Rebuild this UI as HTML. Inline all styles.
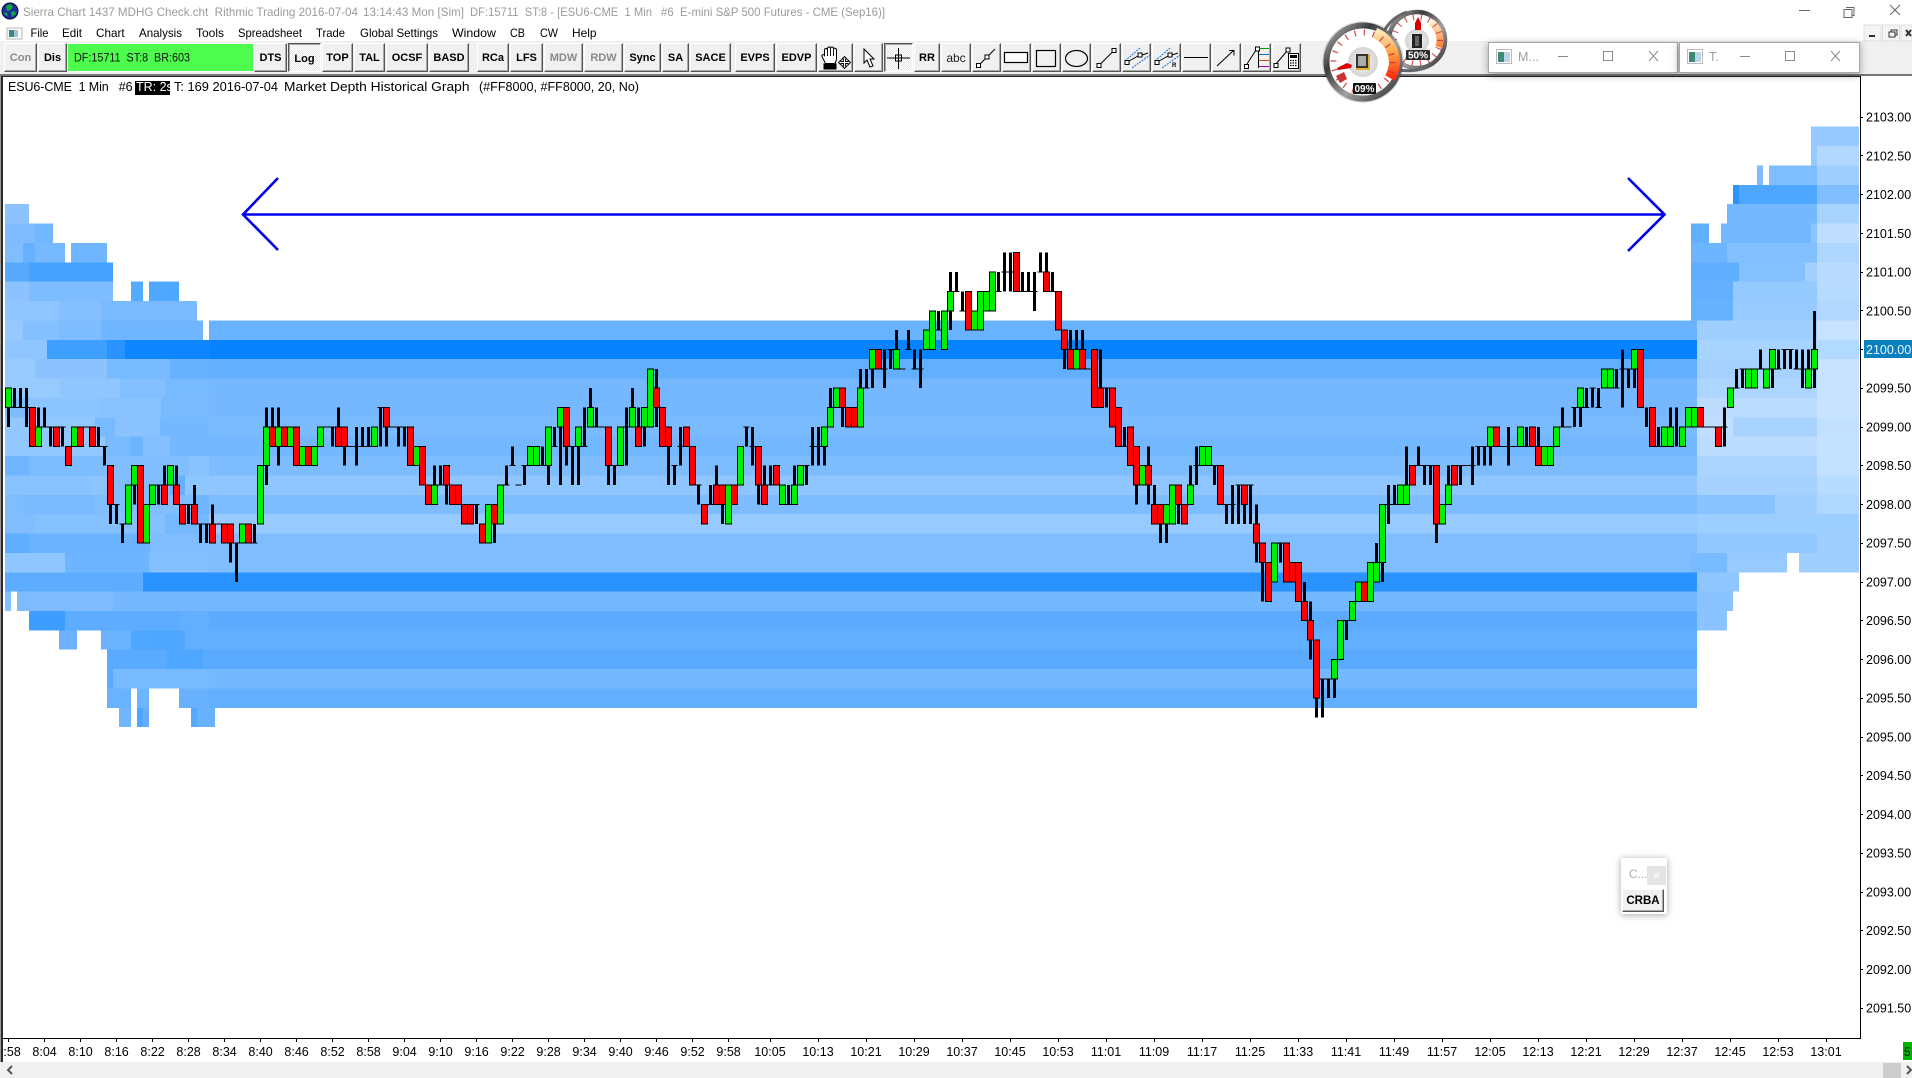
<!DOCTYPE html>
<html><head><meta charset="utf-8"><title>Sierra Chart</title>
<style>
html,body{margin:0;padding:0;background:#fff;width:1912px;height:1078px;overflow:hidden}
body{position:relative;font-family:"Liberation Sans",sans-serif}
#tb{position:absolute;left:0;top:41px;width:1912px;height:33px;background:#f0f0f0}
#tl{position:absolute;left:0;top:74px;width:1912px;height:2px;background:#777}
#sb{position:absolute;left:0;top:1062px;width:1912px;height:16px;background:#f0f0f0}
.b{position:absolute;top:43px;height:29px;box-sizing:border-box;background:#f0f0f0;border:1px solid;border-color:#fff #555 #555 #fff;box-shadow:inset -1px -1px #a8a8a8;font:bold 11px/29px "Liberation Sans",sans-serif;color:#000;text-align:center;white-space:pre}
.g{color:#8a8a8a}
.p{border-color:#555 #fff #fff #555;box-shadow:inset 1px 1px #a8a8a8;background:repeating-conic-gradient(#fff 0 25%,#e6e6e6 0 50%) 0 0/2px 2px}
.w{position:absolute;top:42px;height:31px;box-sizing:border-box;background:#fff;border:1px solid #a8a8a8;box-shadow:0 2px 8px rgba(0,0,0,.35)}
#pop{position:absolute;left:1621px;top:858px;width:46px;height:56px;background:#fff;box-shadow:0 1px 7px rgba(0,0,0,.35)}
svg{position:absolute;left:0;top:0}
text{white-space:pre;font-family:"Liberation Sans",sans-serif}
.bd rect{height:1px}
.p1{font-size:12.5px;fill:#000}
.t1{font-size:12.5px;fill:#000;text-anchor:middle}
.m{font-size:12px;fill:#000}
</style></head><body>
<div id="tb"></div><div id="tl"></div><div id="sb"></div>

<div class="b g" style="left:4px;width:33px">Con</div>
<div class="b" style="left:38px;width:29px">Dis</div>
<div class="b" style="left:67px;width:187px;background:#4dfc4d;box-shadow:none;border-color:#f8f8f8"></div>
<div class="b" style="left:254px;width:33px">DTS</div>
<div class="b p" style="left:288px;width:33px;line-height:31px">Log</div>
<div class="b" style="left:322px;width:31px">TOP</div>
<div class="b" style="left:354px;width:31px">TAL</div>
<div class="b" style="left:386px;width:42px">OCSF</div>
<div class="b" style="left:429px;width:40px">BASD</div>
<div class="b" style="left:477px;width:32px">RCa</div>
<div class="b" style="left:510px;width:33px">LFS</div>
<div class="b g" style="left:544px;width:39px">MDW</div>
<div class="b g" style="left:584px;width:39px">RDW</div>
<div class="b" style="left:624px;width:37px">Sync</div>
<div class="b" style="left:662px;width:27px">SA</div>
<div class="b" style="left:690px;width:41px">SACE</div>
<div class="b" style="left:735px;width:40px">EVPS</div>
<div class="b" style="left:776px;width:41px">EDVP</div>
<div class="b" style="left:818px;width:35px"></div>
<div class="b" style="left:854px;width:29px"></div>
<div class="b p" style="left:884px;width:29px"></div>
<div class="b" style="left:914px;width:26px">RR</div>
<div class="b" style="left:941px;width:30px;font-weight:normal;font-size:12px;color:#222">abc</div>
<div class="b" style="left:972px;width:29px"></div>
<div class="b" style="left:1002px;width:29px"></div>
<div class="b" style="left:1032px;width:29px"></div>
<div class="b" style="left:1062px;width:29px"></div>
<div class="b" style="left:1092px;width:29px"></div>
<div class="b" style="left:1122px;width:29px"></div>
<div class="b" style="left:1152px;width:29px"></div>
<div class="b" style="left:1182px;width:29px"></div>
<div class="b" style="left:1212px;width:29px"></div>
<div class="b" style="left:1242px;width:29px"></div>
<div class="b" style="left:1272px;width:29px"></div>

<svg width="1912" height="1078" viewBox="0 0 1912 1078">
<defs>
<linearGradient id="ring" x1="0" y1="0" x2="1" y2="1"><stop offset="0" stop-color="#bdbdbd"/><stop offset=".3" stop-color="#3c3c3c"/><stop offset=".6" stop-color="#a0a0a0"/><stop offset="1" stop-color="#2a2a2a"/></linearGradient>
<linearGradient id="arc1" x1="0" y1="0" x2="0" y2="1"><stop offset="0" stop-color="#ffe3b0"/><stop offset=".45" stop-color="#ffa040"/><stop offset="1" stop-color="#ff2a10"/></linearGradient>
<linearGradient id="arc2" x1="0" y1="0" x2="0" y2="1"><stop offset="0" stop-color="#ffeec8"/><stop offset="1" stop-color="#ff7a30"/></linearGradient>
<radialGradient id="disc"><stop offset="0" stop-color="#f6f6f6"/><stop offset="1" stop-color="#d4d4d4"/></radialGradient>
<clipPath id="tr"><rect x="135" y="81" width="35" height="14"/></clipPath>
<clipPath id="lft"><rect x="3" y="1040" width="40" height="20"/></clipPath>
</defs>

<!-- depth bands -->
<g class="bd" transform="translate(0 349.5) scale(1 19.37)" shape-rendering="crispEdges">
<!-- main -->
<rect x="209" y="-1.5" width="1488" fill="#68b2ff"/><rect x="209" y="-.5" width="1488" fill="#0783ff"/><rect x="209" y=".5" width="1488" fill="#62aeff"/><rect x="209" y="1.5" width="1488" fill="#75b8ff"/><rect x="209" y="2.5" width="1488" fill="#75b8ff"/><rect x="209" y="3.5" width="1488" fill="#7abbff"/><rect x="209" y="4.5" width="1488" fill="#72b7ff"/><rect x="209" y="5.5" width="1488" fill="#7cbcff"/><rect x="209" y="6.5" width="1488" fill="#8fc6ff"/><rect x="209" y="7.5" width="1488" fill="#7dbcff"/><rect x="209" y="8.5" width="1488" fill="#98caff"/><rect x="209" y="9.5" width="1488" fill="#7fbdff"/><rect x="209" y="10.5" width="1488" fill="#7fbdff"/><rect x="209" y="11.5" width="1488" fill="#2a93ff"/><rect x="209" y="12.5" width="1488" fill="#72b7ff"/><rect x="209" y="13.5" width="1488" fill="#5dabff"/><rect x="209" y="14.5" width="1488" fill="#62aeff"/><rect x="209" y="15.5" width="1488" fill="#5aaaff"/><rect x="209" y="16.5" width="1488" fill="#74b8ff"/><rect x="209" y="17.5" width="1488" fill="#62aeff"/>
<!-- left -->
<rect x="5" y="-7.5" width="24" fill="#8cc3ff"/>
<rect x="5" y="-6.5" width="30" fill="#7fbcff"/><rect x="35" y="-6.5" width="18" fill="#72b7ff"/>
<rect x="5" y="-5.5" width="18" fill="#80bdff"/><rect x="23" y="-5.5" width="12" fill="#66b1ff"/><rect x="35" y="-5.5" width="30" fill="#76b9ff"/><rect x="71" y="-5.5" width="36" fill="#6fb5ff"/>
<rect x="5" y="-4.5" width="24" fill="#58aaff"/><rect x="29" y="-4.5" width="84" fill="#45a2ff"/>
<rect x="5" y="-3.5" width="24" fill="#8cc3ff"/><rect x="29" y="-3.5" width="84" fill="#7dbcff"/><rect x="131" y="-3.5" width="12" fill="#55abff"/><rect x="149" y="-3.5" width="30" fill="#4fa8ff"/>
<rect x="5" y="-2.5" width="54" fill="#8fc6ff"/><rect x="59" y="-2.5" width="42" fill="#84c0ff"/><rect x="101" y="-2.5" width="96" fill="#79baff"/>
<rect x="5" y="-1.5" width="18" fill="#96caff"/><rect x="23" y="-1.5" width="36" fill="#84c0ff"/><rect x="59" y="-1.5" width="42" fill="#7cbcff"/><rect x="101" y="-1.5" width="102" fill="#6fb5ff"/>
<rect x="5" y="-.5" width="42" fill="#90c6ff"/><rect x="47" y="-.5" width="60" fill="#3f9fff"/><rect x="107" y="-.5" width="18" fill="#2a93ff"/><rect x="125" y="-.5" width="84" fill="#0d86ff"/>
<rect x="5" y=".5" width="30" fill="#97cbff"/><rect x="35" y=".5" width="72" fill="#8cc3ff"/><rect x="107" y=".5" width="63" fill="#78baff"/><rect x="170" y=".5" width="39" fill="#67b1ff"/>
<rect x="5" y="1.5" width="55" fill="#97cbff"/><rect x="60" y="1.5" width="60" fill="#90c6ff"/><rect x="120" y="1.5" width="45" fill="#82bfff"/><rect x="165" y="1.5" width="44" fill="#78baff"/>
<rect x="5" y="2.5" width="24" fill="#7dbcff"/><rect x="29" y="2.5" width="71" fill="#8cc4ff"/><rect x="100" y="2.5" width="61" fill="#88c2ff"/><rect x="161" y="2.5" width="48" fill="#79baff"/>
<rect x="5" y="3.5" width="90" fill="#92c8ff"/><rect x="95" y="3.5" width="20" fill="#78baff"/><rect x="115" y="3.5" width="45" fill="#8ac3ff"/><rect x="160" y="3.5" width="49" fill="#74b8ff"/>
<rect x="5" y="4.5" width="100" fill="#92c8ff"/><rect x="105" y="4.5" width="25" fill="#7abbff"/><rect x="130" y="4.5" width="13" fill="#6db5ff"/><rect x="143" y="4.5" width="27" fill="#84c0ff"/><rect x="170" y="4.5" width="39" fill="#74b8ff"/>
<rect x="5" y="5.5" width="24" fill="#6fb5ff"/><rect x="29" y="5.5" width="76" fill="#7dbcff"/><rect x="105" y="5.5" width="85" fill="#80beff"/><rect x="190" y="5.5" width="19" fill="#8ac3ff"/>
<rect x="5" y="6.5" width="85" fill="#88c2ff"/><rect x="90" y="6.5" width="17" fill="#8cc4ff"/><rect x="107" y="6.5" width="63" fill="#80bdff"/><rect x="170" y="6.5" width="15" fill="#66b1ff"/><rect x="185" y="6.5" width="24" fill="#8ec6ff"/>
<rect x="5" y="7.5" width="18" fill="#80bdff"/><rect x="23" y="7.5" width="72" fill="#7abbff"/><rect x="95" y="7.5" width="100" fill="#80beff"/><rect x="195" y="7.5" width="14" fill="#70b5ff"/>
<rect x="5" y="8.5" width="30" fill="#80bdff"/><rect x="35" y="8.5" width="130" fill="#86c1ff"/><rect x="165" y="8.5" width="44" fill="#76b9ff"/>
<rect x="5" y="9.5" width="24" fill="#5eadff"/><rect x="29" y="9.5" width="121" fill="#6bb3ff"/><rect x="150" y="9.5" width="59" fill="#7fbdff"/>
<rect x="5" y="10.5" width="60" fill="#8fc6ff"/><rect x="65" y="10.5" width="84" fill="#6db5ff"/><rect x="149" y="10.5" width="60" fill="#84c0ff"/>
<rect x="5" y="11.5" width="138" fill="#5dacff"/><rect x="143" y="11.5" width="66" fill="#2a93ff"/>
<rect x="5" y="12.5" width="6" fill="#84c0ff"/><rect x="17" y="12.5" width="96" fill="#7fbcff"/><rect x="113" y="12.5" width="96" fill="#75b8ff"/>
<rect x="29" y="13.5" width="36" fill="#3e9eff"/><rect x="65" y="13.5" width="114" fill="#5dacff"/><rect x="179" y="13.5" width="30" fill="#62aeff"/>
<rect x="59" y="14.5" width="18" fill="#6cb3ff"/><rect x="101" y="14.5" width="30" fill="#69b2ff"/><rect x="131" y="14.5" width="54" fill="#50a7ff"/><rect x="185" y="14.5" width="24" fill="#62aeff"/>
<rect x="107" y="15.5" width="60" fill="#5aabff"/><rect x="167" y="15.5" width="36" fill="#4fa6ff"/><rect x="203" y="15.5" width="6" fill="#5aaaff"/>
<rect x="107" y="16.5" width="6" fill="#5aaaff"/><rect x="113" y="16.5" width="96" fill="#78baff"/>
<rect x="107" y="17.5" width="24" fill="#69b2ff"/><rect x="137" y="17.5" width="12" fill="#6cb5ff"/><rect x="179" y="17.5" width="30" fill="#68b1ff"/>
<rect x="119" y="18.5" width="12" fill="#6fb5ff"/><rect x="137" y="18.5" width="6" fill="#4fa6ff"/><rect x="143" y="18.5" width="6" fill="#65aeff"/><rect x="191" y="18.5" width="6" fill="#52a9ff"/><rect x="197" y="18.5" width="18" fill="#67b1ff"/>
<!-- right -->
<rect x="1811" y="-11.5" width="48" fill="#95c9ff"/>
<rect x="1811" y="-10.5" width="6" fill="#95c9ff"/><rect x="1817" y="-10.5" width="42" fill="#b2d8ff"/>
<rect x="1757" y="-9.5" width="6" fill="#7fbdff"/><rect x="1769" y="-9.5" width="48" fill="#7ebdff"/><rect x="1817" y="-9.5" width="42" fill="#9fcfff"/>
<rect x="1733" y="-8.5" width="6" fill="#2a93ff"/><rect x="1739" y="-8.5" width="78" fill="#4ea7ff"/><rect x="1817" y="-8.5" width="42" fill="#80beff"/>
<rect x="1727" y="-7.5" width="90" fill="#74b8ff"/><rect x="1817" y="-7.5" width="42" fill="#a9d3ff"/>
<rect x="1691" y="-6.5" width="18" fill="#63afff"/><rect x="1721" y="-6.5" width="90" fill="#72b7ff"/><rect x="1811" y="-6.5" width="6" fill="#8ac3ff"/><rect x="1817" y="-6.5" width="42" fill="#c0deff"/>
<rect x="1691" y="-5.5" width="36" fill="#6db5ff"/><rect x="1727" y="-5.5" width="90" fill="#82bfff"/><rect x="1817" y="-5.5" width="42" fill="#aed6ff"/>
<rect x="1691" y="-4.5" width="48" fill="#5faeff"/><rect x="1739" y="-4.5" width="66" fill="#85c1ff"/><rect x="1805" y="-4.5" width="12" fill="#a4d0ff"/><rect x="1817" y="-4.5" width="42" fill="#b8dbff"/>
<rect x="1691" y="-3.5" width="42" fill="#64b0ff"/><rect x="1733" y="-3.5" width="84" fill="#95caff"/><rect x="1817" y="-3.5" width="42" fill="#b6dbff"/>
<rect x="1691" y="-2.5" width="42" fill="#67b2ff"/><rect x="1733" y="-2.5" width="84" fill="#97cbff"/><rect x="1817" y="-2.5" width="42" fill="#b2d8ff"/>
<rect x="1697" y="-1.5" width="120" fill="#9fcfff"/><rect x="1817" y="-1.5" width="42" fill="#c6e2ff"/>
<rect x="1697" y="-.5" width="120" fill="#a6d3ff"/><rect x="1817" y="-.5" width="42" fill="#b2d9ff"/>
<rect x="1697" y=".5" width="120" fill="#a4d1ff"/><rect x="1817" y=".5" width="42" fill="#c6e2ff"/>
<rect x="1697" y="1.5" width="120" fill="#acd5ff"/><rect x="1817" y="1.5" width="42" fill="#c6e2ff"/>
<rect x="1697" y="2.5" width="120" fill="#bcdcff"/><rect x="1817" y="2.5" width="42" fill="#c8e3ff"/>
<rect x="1697" y="3.5" width="36" fill="#c0deff"/><rect x="1733" y="3.5" width="84" fill="#a9d3ff"/><rect x="1817" y="3.5" width="42" fill="#c2e0ff"/>
<rect x="1697" y="4.5" width="120" fill="#bcdcff"/><rect x="1817" y="4.5" width="42" fill="#c4e1ff"/>
<rect x="1697" y="5.5" width="120" fill="#aad4ff"/><rect x="1817" y="5.5" width="42" fill="#c4e1ff"/>
<rect x="1697" y="6.5" width="120" fill="#a6d2ff"/><rect x="1817" y="6.5" width="42" fill="#b8dcff"/>
<rect x="1697" y="7.5" width="78" fill="#8ac3ff"/><rect x="1775" y="7.5" width="42" fill="#9fceff"/><rect x="1817" y="7.5" width="42" fill="#b0d7ff"/>
<rect x="1697" y="8.5" width="162" fill="#9cceff"/>
<rect x="1697" y="9.5" width="120" fill="#92c8ff"/><rect x="1817" y="9.5" width="42" fill="#9fcfff"/>
<rect x="1691" y="10.5" width="36" fill="#78baff"/><rect x="1727" y="10.5" width="60" fill="#97cbff"/><rect x="1799" y="10.5" width="60" fill="#9fceff"/>
<rect x="1697" y="11.5" width="42" fill="#90c6ff"/>
<rect x="1697" y="12.5" width="36" fill="#8ac3ff"/>
<rect x="1697" y="13.5" width="30" fill="#8ac3ff"/>
</g>

<!-- arrow -->
<path d="M243 214.5H1664M278 178L243 214.5L278 250M1628 178L1664.5 214.5L1628 251" fill="none" stroke="#0000ee" stroke-width="2.6"/>

<!-- price bars -->
<g transform="translate(5.5 349.5) scale(6 19.37)" shape-rendering="crispEdges" fill="none">
<path vector-effect="non-scaling-stroke" stroke="#000" stroke-width="3" d="M.5 3V4M1.5 2V3M2.5 2V3M3.5 2V4M5.5 3V4M6.5 3V4M7.5 4V5M9.5 4V5M15.5 4V5M16.5 5V6M17.5 8V9M18.5 8V9M19.5 9V10M21.5 7V8M25.5 7V8M26.5 6V7M28.5 6V7M30.5 8V9M31.5 7V8M32.5 9V10M33.5 9V10M34.5 8V9M37.5 10V11M38.5 10V12M41.5 9V10M43.5 3V7M44.5 3V4M45.5 3V6M54.5 4V5M55.5 3V4M56.5 5V6M58.5 4V6M59.5 4V5M60.5 4V5M62.5 3V5M63.5 4V5M65.5 4V5M66.5 4V5M71.5 6V7M72.5 6V7M73.5 7V8M78.5 8V9M81.5 9V10M83.5 6V7M84.5 5V6M86.5 6V7M89.5 5V6M90.5 6V7M91.5 4V5M92.5 4V7M93.5 5V6M94.5 5V7M95.5 5V7M96.5 3V5M97.5 2V3M98.5 3V4M100.5 6V7M101.5 6V7M103.5 3V6M104.5 2V3M105.5 3V4M106.5 4V5M108.5 1V4M110.5 5V7M111.5 6V7M112.5 4V6M115.5 7V8M117.5 7V8M118.5 6V7M119.5 8V9M123.5 4V5M124.5 4V6M125.5 7V8M126.5 6V7M127.5 6V7M130.5 7V8M131.5 6V7M133.5 6V7M134.5 4V6M135.5 4V6M136.5 5V6M137.5 2V3M139.5 3V4M142.5 1V2M143.5 1V2M144.5 1V2M146.5 0V2M147.5 0V1M148.5 -1V0M150.5 -1V0M151.5 0V1M152.5 0V2M155.5 -2V-1M157.5 -4V-1M158.5 -4V-3M159.5 -3V-2M165.5 -4V-3M166.5 -5V-3M167.5 -5V-3M169.5 -4V-3M170.5 -4V-3M171.5 -4V-2M172.5 -5V-4M173.5 -5V-4M174.5 -4V-3M176.5 0V1M177.5 -1V0M178.5 -1V0M179.5 -1V0M182.5 0V2M183.5 2V3M186.5 4V5M188.5 7V8M190.5 5V8M191.5 7V8M192.5 9V10M193.5 9V10M195.5 8V9M197.5 6V7M198.5 5V7M201.5 6V7M203.5 8V9M204.5 7V9M205.5 7V9M206.5 8V9M207.5 7V9M208.5 8V11M209.5 11V13M212.5 10V11M216.5 12V13M217.5 13V16M218.5 18V19M219.5 17V19M220.5 17V18M221.5 17V18M223.5 14V15M228.5 10V11M229.5 11V12M230.5 7V9M231.5 7V8M233.5 5V7M235.5 5V6M236.5 6V7M237.5 6V7M238.5 9V10M240.5 6V7M242.5 6V7M244.5 5V7M245.5 5V6M246.5 5V6M247.5 5V6M250.5 4V6M253.5 4V5M255.5 4V5M259.5 3V4M261.5 3V4M262.5 3V4M263.5 2V3M264.5 2V3M265.5 2V3M268.5 1V2M269.5 0V3M270.5 1V2M271.5 1V2M273.5 3V4M275.5 4V5M277.5 3V4M278.5 3V5M286.5 3V5M288.5 1V2M289.5 1V2M292.5 0V1M294.5 1V2M295.5 0V1M296.5 0V1M297.5 0V1M298.5 0V1M299.5 0V2M300.5 0V1M301.5 -2V2"/>
<path vector-effect="non-scaling-stroke" stroke="#000" stroke-width="1" d="M1 3h1M2 3h1M3 3h1M6 4h1M7 4h1M9 4h1M13 4h1M15 5h1M16 5h1M18 8h1M19 9h1M25 7h1M30 8h1M32 9h1M33 9h1M35 9h1M38 10h1M41 10h1M53 4h1M54 4h1M57 5h1M58 5h1M59 5h1M60 5h1M62 3h1M64 4h1M65 4h1M66 4h1M72 7h1M78 8h1M83 7h1M84 6h1M85 7h1M86 6h1M89 6h1M91 5h1M94 5h1M96 5h1M98 4h1M99 4h1M101 6h1M103 4h1M111 6h1M112 5h1M115 7h1M117 8h1M123 4h1M124 5h1M127 7h1M130 8h1M133 6h1M134 5h1M135 5h1M143 2h1M146 1h1M147 0h1M149 1h1M150 0h1M151 1h1M152 1h1M155 -1h1M158 -3h1M159 -2h1M165 -3h1M166 -4h1M167 -4h1M169 -3h1M170 -3h1M171 -3h1M172 -4h1M174 -3h1M180 1h1M183 2h1M186 5h1M198 6h1M201 6h1M203 8h1M204 8h1M205 7h1M207 7h1M212 10h1M219 17h1M220 17h1M223 14h1M230 8h1M231 8h1M235 6h1M236 6h1M237 6h1M242 6h1M243 6h1M244 6h1M245 5h1M246 5h1M249 5h1M250 5h1M251 5h1M253 5h1M259 4h1M260 4h1M261 3h1M263 3h1M264 2h1M265 3h1M268 2h1M269 1h1M270 1h1M275 5h1M283 4h1M284 4h1M286 4h1M288 2h1M289 1h1M292 1h1M295 1h1M296 0h1M297 0h1M298 1h1M299 1h1"/>
<path vector-effect="non-scaling-stroke" stroke="#000" stroke-width="1" fill="#00f000" d="M0 2h1v1h-1zM5 4h1v1h-1zM11 4h1v1h-1zM20 7h1v2h-1zM21 6h1v1h-1zM23 8h1v2h-1zM24 7h1v1h-1zM27 6h1v1h-1zM39 9h1v1h-1zM42 6h1v3h-1zM43 4h1v2h-1zM45 4h1v1h-1zM47 4h1v1h-1zM49 5h1v1h-1zM51 5h1v1h-1zM52 4h1v1h-1zM61 4h1v1h-1zM68 5h1v1h-1zM71 7h1v1h-1zM80 8h1v2h-1zM82 7h1v2h-1zM87 5h1v1h-1zM88 5h1v1h-1zM90 4h1v2h-1zM92 3h1v1h-1zM95 4h1v1h-1zM97 3h1v1h-1zM102 4h1v2h-1zM104 3h1v1h-1zM106 3h1v1h-1zM107 1h1v3h-1zM120 7h1v2h-1zM122 5h1v2h-1zM129 7h1v1h-1zM131 7h1v1h-1zM132 6h1v1h-1zM136 4h1v1h-1zM137 3h1v1h-1zM138 2h1v1h-1zM142 2h1v2h-1zM144 0h1v1h-1zM148 0h1v1h-1zM153 -1h1v1h-1zM154 -2h1v2h-1zM156 -2h1v2h-1zM157 -3h1v1h-1zM161 -2h1v1h-1zM162 -3h1v2h-1zM163 -3h1v1h-1zM164 -4h1v2h-1zM178 0h1v1h-1zM189 6h1v1h-1zM193 8h1v1h-1zM194 7h1v2h-1zM197 7h1v1h-1zM199 5h1v1h-1zM200 5h1v1h-1zM211 10h1v2h-1zM221 16h1v1h-1zM222 14h1v2h-1zM224 13h1v1h-1zM225 12h1v1h-1zM227 11h1v2h-1zM228 11h1v1h-1zM229 8h1v3h-1zM232 7h1v1h-1zM233 7h1v1h-1zM239 8h1v1h-1zM240 7h1v1h-1zM247 4h1v1h-1zM252 4h1v1h-1zM256 5h1v1h-1zM257 5h1v1h-1zM258 4h1v1h-1zM262 2h1v1h-1zM266 1h1v1h-1zM267 1h1v1h-1zM271 0h1v1h-1zM276 4h1v1h-1zM277 4h1v1h-1zM279 4h1v1h-1zM280 3h1v1h-1zM281 3h1v1h-1zM287 2h1v1h-1zM290 1h1v1h-1zM291 1h1v1h-1zM293 1h1v1h-1zM294 0h1v1h-1zM300 1h1v1h-1zM301 0h1v1h-1z"/>
<path vector-effect="non-scaling-stroke" stroke="#000" stroke-width="1" fill="#ff0000" d="M4 3h1v2h-1zM8 4h1v1h-1zM10 5h1v1h-1zM12 4h1v1h-1zM14 4h1v1h-1zM17 6h1v2h-1zM22 6h1v4h-1zM26 7h1v1h-1zM28 7h1v1h-1zM29 8h1v1h-1zM31 8h1v1h-1zM34 9h1v1h-1zM36 9h1v1h-1zM37 9h1v1h-1zM40 9h1v1h-1zM44 4h1v1h-1zM46 4h1v1h-1zM48 4h1v2h-1zM50 5h1v1h-1zM55 4h1v1h-1zM56 4h1v1h-1zM63 3h1v1h-1zM67 4h1v2h-1zM69 5h1v2h-1zM70 7h1v1h-1zM73 6h1v1h-1zM74 7h1v1h-1zM75 7h1v1h-1zM76 8h1v1h-1zM77 8h1v1h-1zM79 9h1v1h-1zM81 8h1v1h-1zM93 3h1v2h-1zM100 4h1v2h-1zM105 4h1v1h-1zM108 2h1v1h-1zM109 3h1v2h-1zM110 4h1v1h-1zM113 4h1v1h-1zM114 5h1v2h-1zM116 8h1v1h-1zM118 7h1v1h-1zM119 7h1v1h-1zM121 7h1v1h-1zM125 5h1v2h-1zM126 7h1v1h-1zM128 6h1v1h-1zM139 2h1v1h-1zM140 3h1v1h-1zM141 3h1v1h-1zM145 0h1v1h-1zM160 -3h1v2h-1zM168 -5h1v2h-1zM173 -4h1v1h-1zM175 -3h1v2h-1zM176 -1h1v1h-1zM177 0h1v1h-1zM179 0h1v1h-1zM181 0h1v3h-1zM182 2h1v1h-1zM184 2h1v2h-1zM185 3h1v2h-1zM187 4h1v2h-1zM188 5h1v2h-1zM190 6h1v1h-1zM191 8h1v1h-1zM192 8h1v1h-1zM195 7h1v1h-1zM196 8h1v1h-1zM202 6h1v2h-1zM206 7h1v1h-1zM208 9h1v1h-1zM209 10h1v1h-1zM210 11h1v2h-1zM213 10h1v2h-1zM214 11h1v1h-1zM215 11h1v2h-1zM216 13h1v1h-1zM217 14h1v1h-1zM218 15h1v3h-1zM226 12h1v1h-1zM234 6h1v1h-1zM238 6h1v3h-1zM241 6h1v1h-1zM248 4h1v1h-1zM254 4h1v1h-1zM255 5h1v1h-1zM272 0h1v3h-1zM274 3h1v2h-1zM282 3h1v1h-1zM285 4h1v1h-1z"/>
</g>

<!-- frame -->
<g shape-rendering="crispEdges">
<rect x="0" y="76" width="1" height="986" fill="#999"/><rect x="1" y="76" width="2" height="986" fill="#2a2a2a"/>
<rect x="2" y="76" width="1858" height="1" fill="#222"/>
<rect x="1860" y="76" width="1" height="963" fill="#000"/>
<rect x="2" y="1038" width="1859" height="1" fill="#000"/>
</g>

<!-- title bar -->
<circle cx="10" cy="11" r="8" fill="#1c2f9c" stroke="#0a0a3a"/>
<path d="M6 6l4-2 3 2-2 4-4 1zM11 12l4-1 1 3-4 3zM4 12l3 1 1 3-3-1z" fill="#12a83a"/>
<g font-size="12" fill="#9b9b9b" style="font-size:12px">
<text x="23" y="16" textLength="335" lengthAdjust="spacingAndGlyphs">Sierra Chart 1437 MDHG Check.cht  Rithmic Trading 2016-07-04</text>
<text x="363" y="16" textLength="101" lengthAdjust="spacingAndGlyphs">13:14:43 Mon [Sim]</text>
<text x="470" y="16" textLength="182" lengthAdjust="spacingAndGlyphs">DF:15711  ST:8 - [ESU6-CME  1 Min</text>
<text x="661" y="16" textLength="224" lengthAdjust="spacingAndGlyphs">#6  E-mini S&amp;P 500 Futures - CME (Sep16)]</text>
</g>
<path d="M1799 10.5h11" stroke="#666"/>
<path d="M1846 7.5h8v8h-2M1844 9.5h8v8h-8z" fill="none" stroke="#666"/>
<path d="M1890 5l10 10M1900 5l-10 10" stroke="#666" fill="none"/>

<!-- menu -->
<rect x="7" y="28" width="15" height="11" fill="#fff" stroke="#b4b4b4"/><rect x="9" y="30" width="5" height="7" fill="#3d8a7a"/><rect x="14" y="30" width="4" height="7" fill="#9dc0dc"/>
<text class="m" x="30.5" y="37" textLength="18" lengthAdjust="spacingAndGlyphs">File</text>
<text class="m" x="62" y="37" textLength="20" lengthAdjust="spacingAndGlyphs">Edit</text>
<text class="m" x="96" y="37" textLength="28.6" lengthAdjust="spacingAndGlyphs">Chart</text>
<text class="m" x="139" y="37" textLength="43" lengthAdjust="spacingAndGlyphs">Analysis</text>
<text class="m" x="196" y="37" textLength="28" lengthAdjust="spacingAndGlyphs">Tools</text>
<text class="m" x="238" y="37" textLength="64" lengthAdjust="spacingAndGlyphs">Spreadsheet</text>
<text class="m" x="316" y="37" textLength="29" lengthAdjust="spacingAndGlyphs">Trade</text>
<text class="m" x="360" y="37" textLength="78" lengthAdjust="spacingAndGlyphs">Global Settings</text>
<text class="m" x="452" y="37" textLength="44" lengthAdjust="spacingAndGlyphs">Window</text>
<text class="m" x="510" y="37" textLength="15" lengthAdjust="spacingAndGlyphs">CB</text>
<text class="m" x="540" y="37" textLength="18" lengthAdjust="spacingAndGlyphs">CW</text>
<text class="m" x="572" y="37" textLength="24.5" lengthAdjust="spacingAndGlyphs">Help</text>
<!-- MDI buttons -->
<g fill="#f4f4f4" stroke="#ddd"><rect x="1864" y="25" width="17" height="16"/><rect x="1882.500" y="25" width="17" height="16"/><rect x="1901" y="25" width="11" height="16"/></g>
<path d="M1869 36h6" stroke="#333" stroke-width="2"/>
<path d="M1889 32h6v5h-6zM1891 32v-2h6v5h-2" fill="none" stroke="#333"/>
<path d="M1906 30l5 6M1911 30l-5 6" stroke="#333" stroke-width="2"/>

<!-- green status -->
<text x="74" y="61.500" font-size="12" fill="#111" textLength="116" lengthAdjust="spacingAndGlyphs">DF:15711  ST:8  BR:603</text>

<!-- toolbar icons -->
<g fill="none" stroke="#000">
<!-- hand -->
<path d="M825.500 63.500L822 56.500C821.500 54.500 823.500 54 824.500 55.500V50C824.500 48 827.500 48 827.500 50V48.500C827.500 46.500 830.500 46.500 830.500 48.500C830.500 46.500 833.500 46.500 833.500 48.500V49.500C833.500 47.500 836.500 48 836.500 50V59C836.500 60.500 835.500 62 835 63.500Z" fill="#fff"/>
<path d="M827.500 50V56M830.500 48.500V56M833.500 48.500V56" stroke-width=".9"/>
<rect x="824" y="64" width="12" height="5" fill="#000"/>
<path d="M844.500 56.500l-2.500 2.500h1.500v2.500h-2.500v-1.500l-2.500 2.500 2.500 2.500v-1.500h2.500v2.500h-1.500l2.500 2.500 2.500-2.500h-1.500v-2.500h2.500v1.500l2.500-2.500-2.500-2.500v1.500h-2.500v-2.500h1.500z" fill="#fff" stroke-width=".9"/>
<!-- pointer -->
<path d="M864 49v14l3-3 3 7 3-1-3-7h4z" fill="#fff"/>
<!-- crosshair -->
<path d="M887 58h23M898.500 48v21"/><rect x="895.500" y="55" width="6" height="6"/>
<!-- line -->
<rect x="976.500" y="63.500" width="4" height="4" fill="#fff"/><rect x="985" y="55" width="4" height="4" fill="#fff"/><path d="M980 64l5-5M989 55l6-6"/>
<!-- rects -->
<rect x="1004.500" y="52.500" width="23" height="10" fill="#fff" stroke-width="1.200"/>
<rect x="1036.500" y="50.500" width="19" height="16" stroke-width="1.200"/>
<ellipse cx="1076.500" cy="58.500" rx="11" ry="8" stroke-width="1.200"/>
<!-- line2 -->
<rect x="1097" y="63.500" width="4" height="4" fill="#fff"/><rect x="1112" y="48.500" width="4" height="4" fill="#fff"/><path d="M1100.500 64l12-12"/>
<!-- channel -->
<path d="M1125 61l15-13M1132 68l18-13" stroke="#0a6ed8" stroke-dasharray="2 1"/>
<rect x="1125" y="60.500" width="4" height="4" fill="#fff"/><rect x="1138" y="53" width="4" height="4" fill="#fff"/><path d="M1129 61l9-5M1142 55l6-2"/>
<path d="M1155 61l15-13M1162 68l18-13" stroke="#0a6ed8" stroke-dasharray="2 1"/>
<rect x="1155" y="60.500" width="4" height="4" fill="#fff"/><rect x="1168" y="53" width="4" height="4" fill="#fff"/><path d="M1159 61l9-5M1172 55l6-2"/>
<!-- hline / arrow -->
<path d="M1184 57.500h24"/>
<path d="M1217 66l17-16M1229 50.500h5v5"/>
<!-- fib -->
<path d="M1247 64l9-14M1258.500 49v19"/>
<rect x="1244.500" y="64.500" width="4" height="4" fill="#fff"/><rect x="1255.500" y="47" width="4" height="4" fill="#fff"/>
<path d="M1259 48.500h10" stroke="#00a000"/><path d="M1259 54.500h10" stroke="#0a6ed8"/><path d="M1259 60.500h10" stroke="#e05000"/><path d="M1259 66.500h10" stroke="#a000b0"/>
<!-- calc -->
<path d="M1276 64l11-13"/><rect x="1274" y="63.500" width="4" height="4" fill="#fff"/><rect x="1286" y="48" width="4" height="4" fill="#fff"/>
<rect x="1288.500" y="53.500" width="10" height="15" fill="#fff"/><rect x="1290" y="55" width="7" height="3" fill="#000" stroke="none"/>
<path d="M1290 60.500h7M1290 63h7M1290 65.500h7" stroke-dasharray="1.500 1" stroke-width="1.200"/>
</g>
<text x="1154" y="68" font-size="6" font-weight="bold" fill="#000" transform="translate(18 -1)">R</text>

<!-- chart header -->
<text x="8" y="91" font-size="12.500" fill="#000" textLength="124.600" style="font-size:12.5px">ESU6-CME  1 Min   #6</text>
<rect x="135" y="81" width="35" height="14" fill="#000"/>
<text x="136" y="91" fill="#fff" clip-path="url(#tr)" style="font-size:12.5px">TR: 2s</text>
<text x="174" y="91" fill="#000" textLength="104" lengthAdjust="spacingAndGlyphs" style="font-size:12.5px">T: 169 2016-07-04</text>
<text x="284" y="91" fill="#000" textLength="185.500" lengthAdjust="spacingAndGlyphs" style="font-size:12.5px">Market Depth Historical Graph</text>
<text x="479" y="91" fill="#000" textLength="160" lengthAdjust="spacingAndGlyphs" style="font-size:12.5px">(#FF8000, #FF8000, 20, No)</text>

<!-- price axis -->
<path d="M1860 117.500h3M1860 155.500h3M1860 194.500h3M1860 233.500h3M1860 272.500h3M1860 310.500h3M1860 349.500h3M1860 388.500h3M1860 427.500h3M1860 465.500h3M1860 504.500h3M1860 543.500h3M1860 582.500h3M1860 620.500h3M1860 659.500h3M1860 698.500h3M1860 737.500h3M1860 775.500h3M1860 814.500h3M1860 853.500h3M1860 892.500h3M1860 930.500h3M1860 969.500h3M1860 1008.500h3" stroke="#000" shape-rendering="crispEdges"/>
<rect x="1864" y="340" width="48" height="18" fill="#0a80bd"/>
<g class="pg">
<text class="p1" x="1866" y="121.600">2103.00</text><text class="p1" x="1866" y="160.300">2102.50</text><text class="p1" x="1866" y="199">2102.00</text><text class="p1" x="1866" y="237.800">2101.50</text><text class="p1" x="1866" y="276.500">2101.00</text><text class="p1" x="1866" y="315.300">2100.50</text>
<text class="p1" x="1866" y="354" style="fill:#e8f6ff">2100.00</text>
<text class="p1" x="1866" y="392.700">2099.50</text><text class="p1" x="1866" y="431.500">2099.00</text><text class="p1" x="1866" y="470.200">2098.50</text><text class="p1" x="1866" y="509">2098.00</text><text class="p1" x="1866" y="547.700">2097.50</text><text class="p1" x="1866" y="586.400">2097.00</text><text class="p1" x="1866" y="625.200">2096.50</text><text class="p1" x="1866" y="663.900">2096.00</text><text class="p1" x="1866" y="702.700">2095.50</text><text class="p1" x="1866" y="741.400">2095.00</text><text class="p1" x="1866" y="780.100">2094.50</text><text class="p1" x="1866" y="818.900">2094.00</text><text class="p1" x="1866" y="857.600">2093.50</text><text class="p1" x="1866" y="896.400">2093.00</text><text class="p1" x="1866" y="935.100">2092.50</text><text class="p1" x="1866" y="973.800">2092.00</text><text class="p1" x="1866" y="1012.600">2091.50</text>
</g>

<!-- time axis -->
<path d="M8.500 1039v3M44.500 1039v3M80.500 1039v3M116.500 1039v3M152.500 1039v3M188.500 1039v3M224.500 1039v3M260.500 1039v3M296.500 1039v3M332.500 1039v3M368.500 1039v3M404.500 1039v3M440.500 1039v3M476.500 1039v3M512.500 1039v3M548.500 1039v3M584.500 1039v3M620.500 1039v3M656.500 1039v3M692.500 1039v3M728.500 1039v3M770.500 1039v3M818.500 1039v3M866.500 1039v3M914.500 1039v3M962.500 1039v3M1010.500 1039v3M1058.500 1039v3M1106.500 1039v3M1154.500 1039v3M1202.500 1039v3M1250.500 1039v3M1298.500 1039v3M1346.500 1039v3M1394.500 1039v3M1442.500 1039v3M1490.500 1039v3M1538.500 1039v3M1586.500 1039v3M1634.500 1039v3M1682.500 1039v3M1730.500 1039v3M1778.500 1039v3M1826.500 1039v3" stroke="#000" shape-rendering="crispEdges"/>
<text class="t1" x="8.600" y="1056" clip-path="url(#lft)">7:58</text>
<text class="t1" x="44.600" y="1056">8:04</text><text class="t1" x="80.600" y="1056">8:10</text><text class="t1" x="116.600" y="1056">8:16</text><text class="t1" x="152.600" y="1056">8:22</text><text class="t1" x="188.600" y="1056">8:28</text><text class="t1" x="224.600" y="1056">8:34</text><text class="t1" x="260.600" y="1056">8:40</text><text class="t1" x="296.600" y="1056">8:46</text><text class="t1" x="332.600" y="1056">8:52</text><text class="t1" x="368.600" y="1056">8:58</text><text class="t1" x="404.600" y="1056">9:04</text><text class="t1" x="440.600" y="1056">9:10</text><text class="t1" x="476.600" y="1056">9:16</text><text class="t1" x="512.600" y="1056">9:22</text><text class="t1" x="548.600" y="1056">9:28</text><text class="t1" x="584.600" y="1056">9:34</text><text class="t1" x="620.600" y="1056">9:40</text><text class="t1" x="656.600" y="1056">9:46</text><text class="t1" x="692.600" y="1056">9:52</text><text class="t1" x="728.600" y="1056">9:58</text>
<text class="t1" x="770" y="1056">10:05</text><text class="t1" x="818" y="1056">10:13</text><text class="t1" x="866" y="1056">10:21</text><text class="t1" x="914" y="1056">10:29</text><text class="t1" x="962" y="1056">10:37</text><text class="t1" x="1010" y="1056">10:45</text><text class="t1" x="1058" y="1056">10:53</text><text class="t1" x="1106" y="1056">11:01</text><text class="t1" x="1154" y="1056">11:09</text><text class="t1" x="1202" y="1056">11:17</text><text class="t1" x="1250" y="1056">11:25</text><text class="t1" x="1298" y="1056">11:33</text><text class="t1" x="1346" y="1056">11:41</text><text class="t1" x="1394" y="1056">11:49</text><text class="t1" x="1442" y="1056">11:57</text><text class="t1" x="1490" y="1056">12:05</text><text class="t1" x="1538" y="1056">12:13</text><text class="t1" x="1586" y="1056">12:21</text><text class="t1" x="1634" y="1056">12:29</text><text class="t1" x="1682" y="1056">12:37</text><text class="t1" x="1730" y="1056">12:45</text><text class="t1" x="1778" y="1056">12:53</text><text class="t1" x="1826" y="1056">13:01</text>

<!-- bottom right -->
<rect x="1903" y="1042" width="9" height="18" fill="#00b400"/>
<text x="1904" y="1056" font-size="12" fill="#000">5</text>
<rect x="1883" y="1063" width="18" height="15" fill="#cdcdcd"/>
<path d="M1907 1066l4 4-4 4" fill="none" stroke="#555" stroke-width="2"/>
<path d="M12 1066l-4 4 4 4" fill="none" stroke="#555" stroke-width="2"/>

<!-- gauges -->
<g>
<path d="M1384 32Q1392 17 1408 11L1430 66Q1412 73 1396 69z" fill="#fff"/>
<circle cx="1417" cy="40" r="28" fill="#fff" stroke="url(#ring)" stroke-width="4.500"/>
<path d="M1384 31Q1392 17 1407 12M1397 69.500Q1412 73 1428 67" fill="none" stroke="#666" stroke-width="3"/>
<path d="M1431 22A23 23 0 0 1 1439 47" fill="none" stroke="url(#arc2)" stroke-width="7"/>
<circle cx="1417" cy="40" r="23" fill="none" stroke="#c83232" stroke-width="6" stroke-dasharray="1.200 6.800" opacity=".8"/>
<circle cx="1417" cy="41" r="12" fill="url(#disc)"/>
<rect x="1412" y="34" width="10" height="14" fill="#222"/><rect x="1415" y="36" width="4" height="10" fill="#666"/>
<path d="M1418 17l3 6v7h-6v-7z" fill="#d80000"/>
<rect x="1406" y="50" width="24" height="10" rx="1" fill="#2c2c2c"/>
<text x="1418" y="58.500" font-size="10" font-weight="bold" fill="#fff" text-anchor="middle">50%</text>
<circle cx="1363" cy="62" r="36.500" fill="#fff" stroke="url(#ring)" stroke-width="6"/>
<circle cx="1363" cy="62" r="40" fill="none" stroke="#000" stroke-opacity=".15" stroke-width="1.500"/>
<path d="M1375 33A31.500 31.500 0 0 1 1390 78" fill="none" stroke="url(#arc1)" stroke-width="11"/>
<circle cx="1363" cy="62" r="29.500" fill="none" stroke="#c83232" stroke-width="6" stroke-dasharray="1.300 8" opacity=".85"/>
<path d="M1336 76l8-4 3 7-7 4z" fill="#c83232"/>
<circle cx="1363" cy="62" r="15" fill="url(#disc)"/>
<rect x="1356" y="54" width="14" height="16" fill="#e0b030"/><rect x="1356" y="54" width="12" height="14" fill="#333"/><rect x="1358" y="56" width="8" height="10" fill="#aaa"/>
<path d="M1337 68l10-5 5 2-1 3-6 1-7 1z" fill="#dc0000"/>
<rect x="1353" y="83" width="23" height="11" rx="1" fill="#111"/>
<text x="1364.500" y="92" font-size="10" font-weight="bold" fill="#fff" text-anchor="middle">09%</text>
</g>
</svg>

<div class="w" style="left:1488px;width:190px"></div>
<div class="w" style="left:1679px;width:181px"></div>
<div id="pop"></div>
<div class="b" style="left:1622px;top:889px;width:42px;height:23px;font:bold 11.5px/23px 'Liberation Sans',sans-serif">CRBA</div>

<svg width="1912" height="1078" viewBox="0 0 1912 1078" style="pointer-events:none">
<g fill="none" stroke="#888">
<rect x="1496.500" y="49.500" width="15" height="14" fill="#fff" stroke="#bbb"/><rect x="1498" y="52" width="6" height="10" fill="#3d8a7a" stroke="none"/><rect x="1504" y="52" width="6" height="10" fill="#bcd4e6" stroke="none"/>
<path d="M1558 56.500h10M1603.500 51.500h9v9h-9zM1649 51l9 10M1658 51l-9 10"/>
<rect x="1687.500" y="49.500" width="15" height="14" fill="#fff" stroke="#bbb"/><rect x="1689" y="52" width="6" height="10" fill="#3d8a7a" stroke="none"/><rect x="1695" y="52" width="6" height="10" fill="#bcd4e6" stroke="none"/>
<path d="M1740 56.500h10M1785.500 51.500h9v9h-9zM1831 51l9 10M1840 51l-9 10"/>
</g>
<text x="1518" y="61" font-size="12.500" fill="#a0a0a0">M...</text>
<text x="1709" y="61" font-size="12.500" fill="#a0a0a0">T.</text>
<text x="1629" y="878" font-size="12" fill="#b0b0b0">C...</text>
<rect x="1647" y="866" width="19" height="19" fill="#e4e4e4"/>
<path d="M1654 873l5 5M1659 873l-5 5" stroke="#f6f6f6" stroke-width="1.500"/>
</svg>
</body></html>
